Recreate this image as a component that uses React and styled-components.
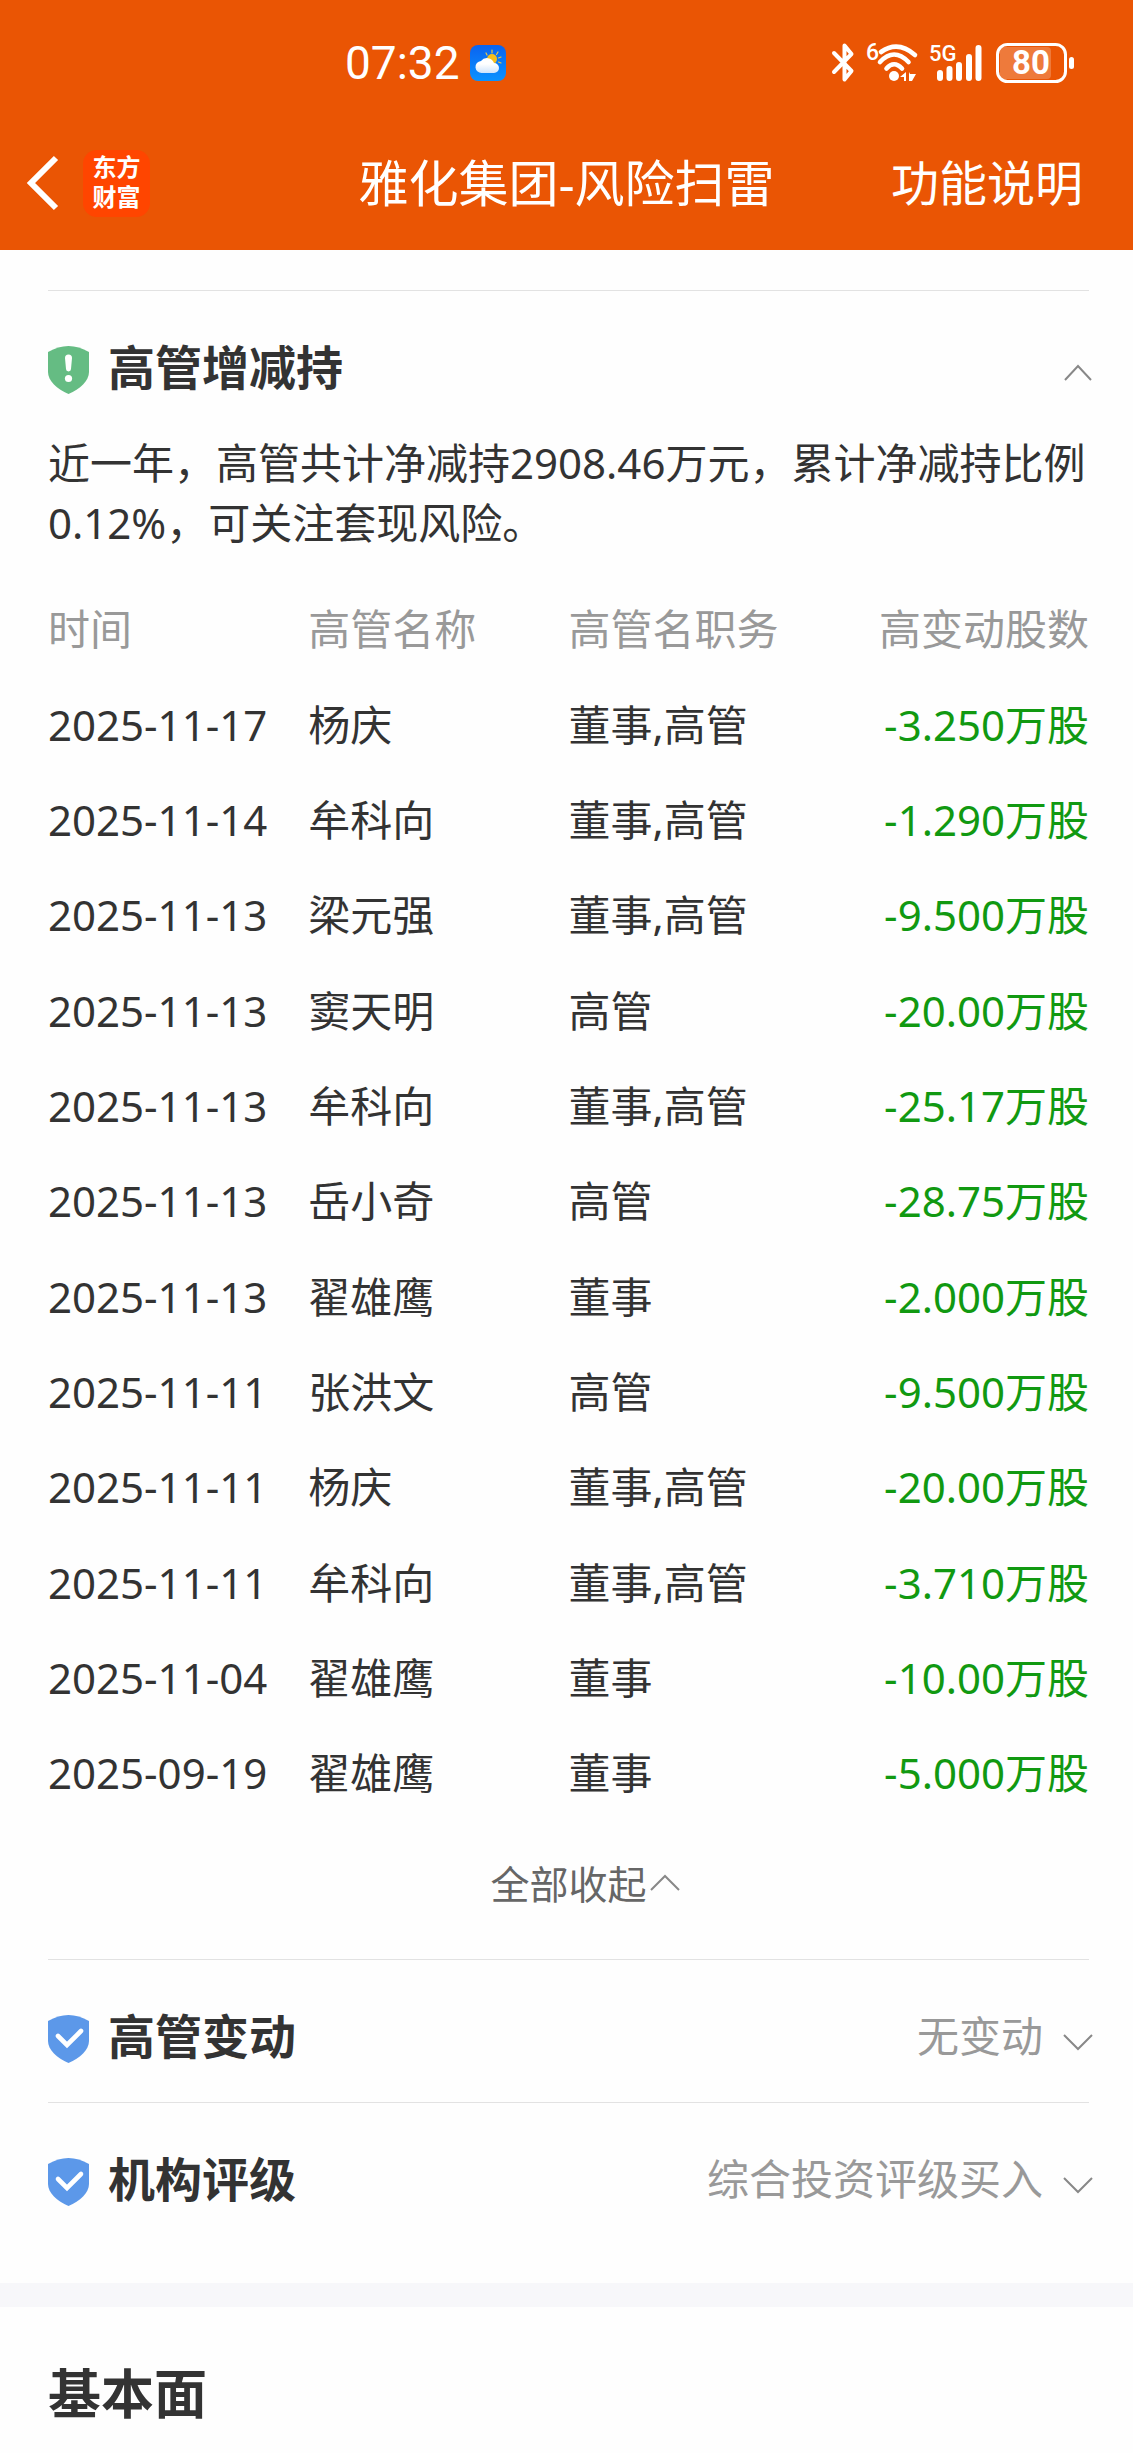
import { useState } from 'react';

/* Style */
import styled, { createGlobalStyle } from 'styled-components';

const records = [
  { date: '2025-11-17', name: '杨庆', job: '董事,高管', change: '-3.250万股' },
  { date: '2025-11-14', name: '牟科向', job: '董事,高管', change: '-1.290万股' },
  { date: '2025-11-13', name: '梁元强', job: '董事,高管', change: '-9.500万股' },
  { date: '2025-11-13', name: '窦天明', job: '高管', change: '-20.00万股' },
  { date: '2025-11-13', name: '牟科向', job: '董事,高管', change: '-25.17万股' },
  { date: '2025-11-13', name: '岳小奇', job: '高管', change: '-28.75万股' },
  { date: '2025-11-13', name: '翟雄鹰', job: '董事', change: '-2.000万股' },
  { date: '2025-11-11', name: '张洪文', job: '高管', change: '-9.500万股' },
  { date: '2025-11-11', name: '杨庆', job: '董事,高管', change: '-20.00万股' },
  { date: '2025-11-11', name: '牟科向', job: '董事,高管', change: '-3.710万股' },
  { date: '2025-11-04', name: '翟雄鹰', job: '董事', change: '-10.00万股' },
  { date: '2025-09-19', name: '翟雄鹰', job: '董事', change: '-5.000万股' },
];

/* Icons */
const WeatherIcon = () => (
  <svg width="36" height="36" viewBox="0 0 36 36" aria-hidden="true">
    <defs>
      <linearGradient id="sky" x1="0" y1="0" x2="0" y2="1">
        <stop offset="0" stopColor="#0a63f0" />
        <stop offset="1" stopColor="#0a92ff" />
      </linearGradient>
      <linearGradient id="cloud" x1="0" y1="0" x2="0" y2="1">
        <stop offset="0.4" stopColor="#ffffff" />
        <stop offset="1" stopColor="#cfe4fb" />
      </linearGradient>
    </defs>
    <rect width="36" height="36" rx="8" fill="url(#sky)" />
    <g stroke="#e8c84a" strokeWidth="1.2" strokeLinecap="round">
      <path d="M16 8l1 2M22 5v3M28 7l-1.500 2.500M31 12l-2.500 1M31 18l-2.500-1" />
    </g>
    <circle cx="22" cy="14" r="5" fill="#f7bf1c" />
    <path
      d="M12 28a6 6 0 0 1-1-12 7.500 7.500 0 0 1 13 2 5 5 0 0 1 0 10z"
      fill="url(#cloud)"
    />
  </svg>
);

const BluetoothIcon = () => (
  <svg width="22" height="40" viewBox="0 0 22 40" fill="none" stroke="#fff" strokeWidth="4" strokeLinecap="round" strokeLinejoin="round" aria-hidden="true">
    <path d="M2 10L19.500 28L12.500 36.500V2.500L19.500 11L2 29" />
  </svg>
);

const WifiIcon = () => (
  <svg width="52" height="40" viewBox="0 0 52 40" aria-label="WiFi 6" role="img">
    <SmallText x="0" y="17" fontSize="23">6</SmallText>
    <g fill="none" stroke="#fff" strokeWidth="4.600" strokeLinecap="round">
      <path d="M15 9Q32 -3 49 12" />
      <path d="M14 19Q28 4 42.500 19" />
      <path d="M20.500 25.500Q28 17 36 25.500" />
    </g>
    <circle cx="28" cy="33" r="5" fill="#fff" />
    <path d="M34 34l6-5v9h-2v-4zM43 29l1 2h6l-4 7h-3z" fill="#fff" />
  </svg>
);

const SignalIcon = () => (
  <svg width="53" height="40" viewBox="0 0 53 40" aria-label="5G" role="img">
    <SmallText x="-1" y="18" fontSize="22">5G</SmallText>
    <g stroke="#fff" strokeWidth="6" strokeLinecap="round">
      <path d="M10 30v5M19.500 26v9M29 22v13M39 14v21M48.500 5v30" />
    </g>
  </svg>
);

const BatteryIcon = () => (
  <svg width="79" height="40" viewBox="0 0 79 40" aria-label="电量 80" role="img">
    <rect x="5" y="4" width="51" height="32" rx="4" fill="#fff" fillOpacity="0.22" />
    <rect x="2.500" y="1.500" width="68" height="37" rx="10" fill="none" stroke="#fff" strokeWidth="3" />
    <rect x="74" y="14" width="5" height="12" rx="2.500" fill="#fff" />
    <BatteryText x="36" y="31" fontSize="33" textAnchor="middle">80</BatteryText>
  </svg>
);

const BackIcon = () => (
  <svg width="34" height="56" viewBox="0 0 34 56" fill="none" stroke="#fff" strokeWidth="6" aria-hidden="true">
    <path d="M30 3L5 28l25 25" />
  </svg>
);

const Shield = ({ warn }) => (
  <ShieldSvg viewBox="0 0 41 54" aria-hidden="true">
    <path
      d="M0 12Q20.500 0 41 12V32C41 41 32 49 20.500 54C9 49 0 41 0 32Z"
      fill={warn ? '#65bc83' : '#5c98e9'}
    />
    {warn ? (
      <g fill="#fff">
        <path d="M17 18a3.500 3.500 0 0 1 7 0l-1 11a2.500 2.500 0 0 1-5 0z" />
        <circle cx="20.500" cy="38.500" r="3.600" />
      </g>
    ) : (
      <path d="M10 27l9 9 14-14" fill="none" stroke="#fff" strokeWidth="4.600" strokeLinecap="round" />
    )}
  </ShieldSvg>
);

const Chevron = ({ up, inline }) => (
  <ChevronSvg viewBox="0 0 28 30" aria-hidden="true">
    <path d={inline ? 'M0 21L14 7L28 21' : up ? 'M1 28L14 14L27 28' : 'M0 14L14 28L28 14'} />
  </ChevronSvg>
);

const Section = ({ title, value, warn, open, onClick }) => (
  <SectionHead type="button" aria-expanded={open} onClick={onClick}>
    <Shield warn={warn} />
    <SectionTitle>{title}</SectionTitle>
    <SectionValue>{value}</SectionValue>
    <Chevron up={open} />
  </SectionHead>
);

const App = () => {
  const [open, setOpen] = useState(true);

  return (
    <>
      <GlobalStyle />
      <HeaderBox>
        <StatusBar>
          <ClockBox>
            <Clock>07:32</Clock>
            <WeatherIcon />
          </ClockBox>
          <StatusIcons>
            <BluetoothIcon />
            <WifiIcon />
            <SignalIcon />
            <BatteryIcon />
          </StatusIcons>
        </StatusBar>
        <NavBar>
          <NavLeft>
            <NavBtn type="button" aria-label="返回"><BackIcon /></NavBtn>
            <Logo>
              <span>东方</span>
              <span>财富</span>
            </Logo>
          </NavLeft>
          <NavTitle>雅化集团-风险扫雷</NavTitle>
          <NavLink href="#help">功能说明</NavLink>
        </NavBar>
      </HeaderBox>

      <main>
        <PrevSection />
        <Divider />
        <Section title="高管增减持" warn open={open} onClick={() => setOpen(!open)} />
        {open && (
          <Detail>
            <Summary>
              近一年，高管共计净减持2908.46万元，累计净减持比例0.12%，可关注套现风险。
            </Summary>
            <Table>
              <thead>
                <tr>
                  <Th scope="col">时间</Th>
                  <Th scope="col">高管名称</Th>
                  <Th scope="col">高管名职务</Th>
                  <Th scope="col" $right>高变动股数</Th>
                </tr>
              </thead>
              <tbody>
                {records.map((item, index) => (
                  <tr key={index}>
                    <Td>{item.date}</Td>
                    <Td>{item.name}</Td>
                    <Td>{item.job}</Td>
                    <Td $right>{item.change}</Td>
                  </tr>
                ))}
              </tbody>
            </Table>
            <FoldBtn type="button" onClick={() => setOpen(false)}>
              <FoldText>全部收起</FoldText>
              <Chevron up inline />
            </FoldBtn>
          </Detail>
        )}
        <Divider />
        <Section title="高管变动" value="无变动" open={false} />
        <Divider />
        <Section title="机构评级" value="综合投资评级买入" open={false} />
        <Band />
        <PartTitle>基本面</PartTitle>
      </main>
    </>
  );
}

const GlobalStyle = createGlobalStyle`
  * {
    box-sizing: border-box;
  }

  body {
    margin: 0;
    background-color: #fefefe;
    color: #333;
    font-family: "Noto Sans", "Noto Sans CJK SC", sans-serif;
    font-size: 42px;
    line-height: 60px;
  }

  button {
    border: 0;
    padding: 0;
    background: none;
    color: inherit;
    font: inherit;
    cursor: pointer;
  }

  svg {
    display: block;
    flex-shrink: 0;
    overflow: visible;
  }
`;

const HeaderBox = styled.header`
  background-color: #ea5504;
  color: #fff;
`;

const StatusBar = styled.div`
  height: 126px;
  padding: 0 59px 0 345px;
  display: flex;
  justify-content: space-between;
  align-items: center;
`;

const ClockBox = styled.div`
  display: flex;
  align-items: center;
  gap: 10px;
`;

const Clock = styled.span`
  font-family: Roboto, sans-serif;
  font-size: 46px;
`;

const StatusIcons = styled.div`
  display: flex;
  align-items: center;
  gap: 12px;
`;

const SmallText = styled.text`
  fill: #fff;
  font-family: Roboto, sans-serif;
  font-weight: 500;
`;

const BatteryText = styled(SmallText)`
  font-weight: 700;
`;

const NavBar = styled.nav`
  height: 124px;
  padding-bottom: 10px;
  display: grid;
  grid-template-columns: 1fr auto 1fr;
  align-items: center;
`;

const NavLeft = styled.div`
  padding-left: 26px;
  display: flex;
  align-items: center;
  gap: 23px;
`;

const NavBtn = styled.button`
  display: block;
`;

const Logo = styled.div`
  width: 67px;
  height: 67px;
  padding-bottom: 3px;
  display: flex;
  flex-direction: column;
  align-items: center;
  justify-content: center;
  border-radius: 14px;
  background-color: #ff4500;
  font-size: 24px;
  font-weight: 700;
  line-height: 30px;
`;

const NavTitle = styled.h1`
  margin: 0;
  font-size: 50px;
  font-weight: 400;
`;

const NavLink = styled.a`
  padding-right: 50px;
  color: #fff;
  font-size: 48px;
  text-align: right;
  text-decoration: none;
`;

const PrevSection = styled.div`
  height: 40px;
`;

const Divider = styled.hr`
  height: 1px;
  margin: 0 44px 0 48px;
  border: 0;
  background-color: #e2e2e2;
`;

const SectionHead = styled.button`
  width: 100%;
  padding: 46px 41px 36px 48px !important;
  display: flex;
  align-items: center;
  text-align: left;
`;

const ShieldSvg = styled.svg`
  width: 41px;
  height: 54px;
  margin-right: 19px;
`;

const SectionTitle = styled.span`
  font-size: 47px;
  font-weight: 700;
`;

const SectionValue = styled.span`
  margin-left: auto;
  margin-right: 21px;
  color: #999;
`;

const ChevronSvg = styled.svg`
  width: 28px;
  height: 30px;
  fill: none;
  stroke: #888;
  stroke-width: 2;
`;

const Detail = styled.div`
  padding: 0 44px 0 48px;
`;

const Summary = styled.p`
  margin: 0 0 28px;
`;

const Table = styled.table`
  width: 100%;
  height: 1240px;
  table-layout: fixed;
  border-collapse: collapse;
`;

const Td = styled.td`
  width: 25%;
  padding: 0;
  color: ${({ $right }) => ($right ? '#119911' : '#333')};
  text-align: ${({ $right }) => ($right ? 'right' : 'left')};
  white-space: nowrap;
`;

const Th = styled.th`
  width: 25%;
  height: 96px;
  padding: 0;
  color: #999;
  font-weight: 400;
  text-align: ${({ $right }) => ($right ? 'right' : 'left')};
  white-space: nowrap;
`;

const FoldBtn = styled.button`
  width: 100%;
  height: 138px;
  padding-bottom: 12px !important;
  display: grid;
  grid-template-columns: 1fr auto 1fr;
  align-items: center;
  column-gap: 4px;
  color: #666;
`;

const FoldText = styled.span`
  grid-column: 2;
  font-size: 39px;
`;

const Band = styled.div`
  height: 24px;
  margin-top: 38px;
  background-color: #f7f7fa;
`;

const PartTitle = styled.h2`
  margin: 0;
  padding: 57px 48px 29px;
  font-size: 53px;
  font-weight: 700;
`;

export default App;
